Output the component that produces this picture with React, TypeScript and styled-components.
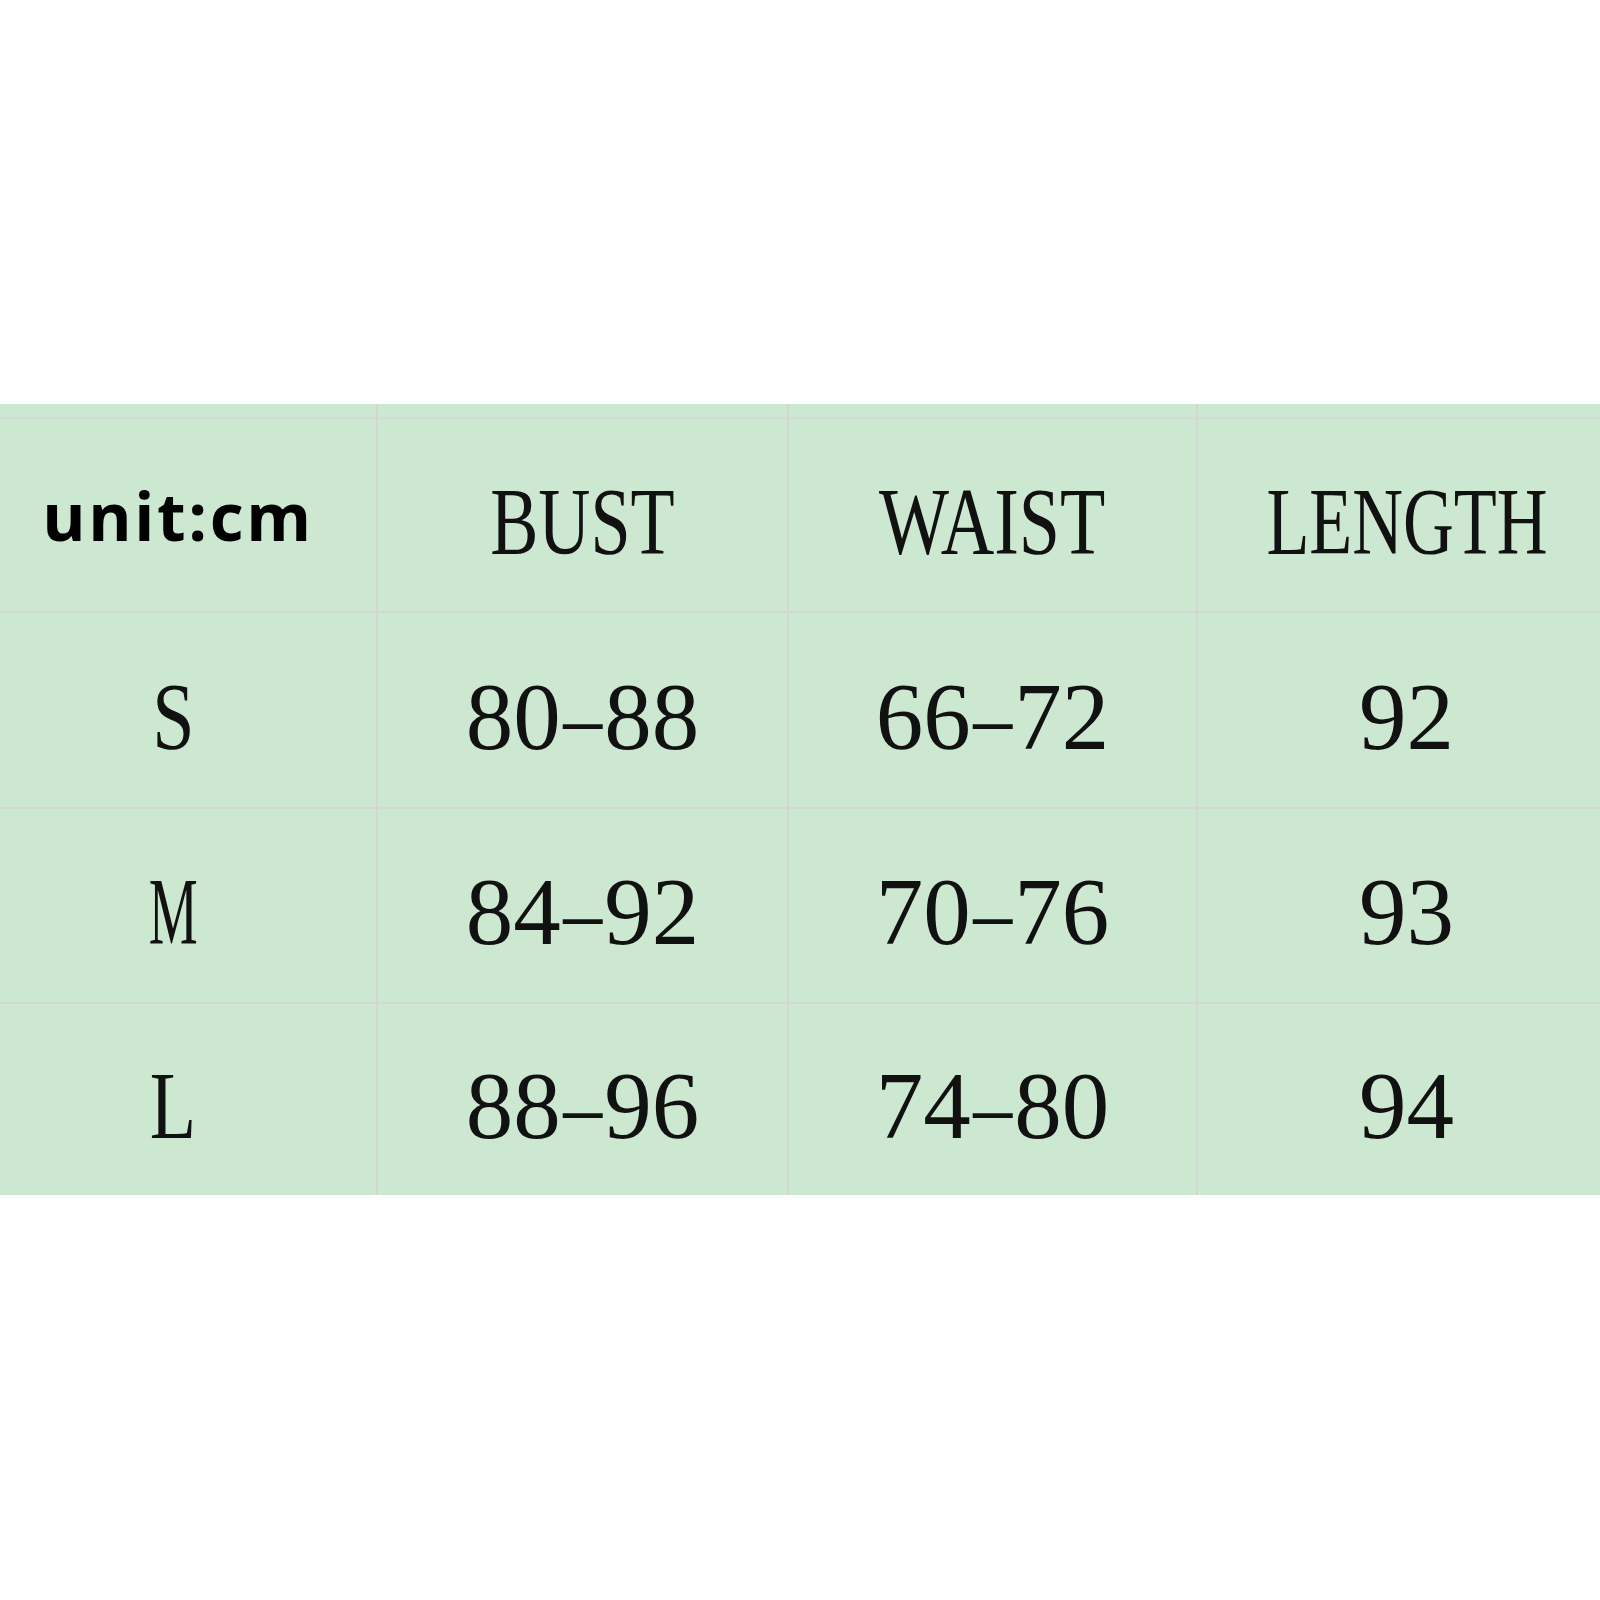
import { FC } from 'react'
import styled, { createGlobalStyle } from 'styled-components'

const GlobalStyle = createGlobalStyle`
	html,
	body {
		margin: 0;
		padding: 0;
		background: #ffffff;
		overflow: hidden;
	}
`

const Page = styled.div`
	width: 1600px;
	height: 1600px;
	padding-top: 404px;
	box-sizing: border-box;
	background: #ffffff;
	overflow: hidden;
`

const SizeTable = styled.div`
	display: grid;
	width: 1645px;
	margin-left: -30px;
	grid-template-columns: 406px 409px 407px 417px;
	grid-template-rows: 13px 192px 194px 193px 191px;
	gap: 2px;
	background: #d3d6d2;
`

const Cell = styled.div`
	display: flex;
	align-items: center;
	justify-content: center;
	padding-top: 14px;
	box-sizing: border-box;
	background: #cde8d1;
	overflow: hidden;
`

const UnitLabel = styled.span`
	font-family: 'Open Sans', 'Liberation Sans', sans-serif;
	font-weight: 700;
	font-size: 66px;
	letter-spacing: 2.6px;
	color: #000000;
	line-height: 1;
	margin-top: -14px;
	margin-left: 10px;
`

const Value = styled.span<{ $squeeze?: number }>`
	display: inline-block;
	font-family: 'Liberation Serif', 'Times New Roman', serif;
	font-size: 95px;
	line-height: 1;
	color: #111111;
	white-space: nowrap;
	transform: scaleX(${({ $squeeze }) => $squeeze ?? 1});
`

const Dash = styled.span`
	display: inline-block;
	transform: scaleX(0.82);
	margin: 0 -2px;
`

const headers = [
	{ label: 'BUST', squeeze: 0.76 },
	{ label: 'WAIST', squeeze: 0.78 },
	{ label: 'LENGTH', squeeze: 0.74 },
]

const rows = [
	{ size: 'S', squeeze: 0.8, values: ['80-88', '66-72', '92'] },
	{ size: 'M', squeeze: 0.58, values: ['84-92', '70-76', '93'] },
	{ size: 'L', squeeze: 0.8, values: ['88-96', '74-80', '94'] },
]

const Range: FC<{ text: string }> = ({ text }) => {
	const [from, to] = text.split('-')
	if (to === undefined) return <Value>{from}</Value>
	return (
		<Value>
			{from}
			<Dash>–</Dash>
			{to}
		</Value>
	)
}

const App: FC = () => {
	return (
		<>
			<GlobalStyle />
			<Page>
				<SizeTable>
					{/* cut-off row above the header */}
					<Cell />
					<Cell />
					<Cell />
					<Cell />

					<Cell>
						<UnitLabel>unit:cm</UnitLabel>
					</Cell>
					{headers.map((h) => (
						<Cell key={h.label}>
							<Value $squeeze={h.squeeze}>{h.label}</Value>
						</Cell>
					))}

					{rows.map((row) => [
						<Cell key={row.size}>
							<Value $squeeze={row.squeeze}>{row.size}</Value>
						</Cell>,
						...row.values.map((v, i) => (
							<Cell key={row.size + i}>
								<Range text={v} />
							</Cell>
						)),
					])}
				</SizeTable>
			</Page>
		</>
	)
}

export default App
